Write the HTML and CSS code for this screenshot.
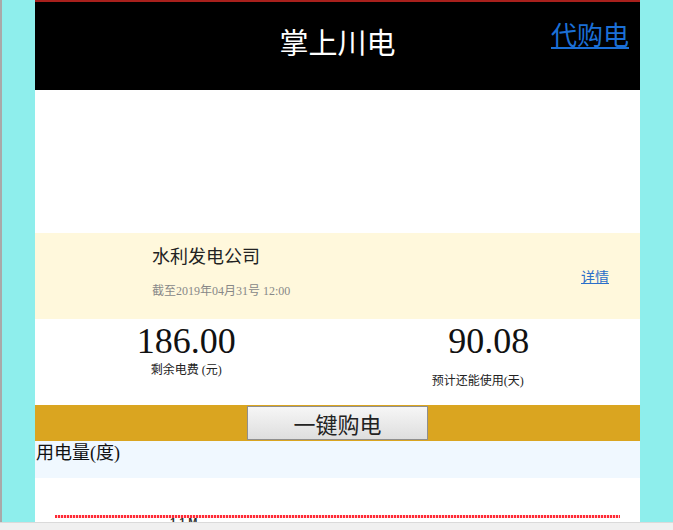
FILE: index.html
```html
<!DOCTYPE html>
<html lang="zh-CN">
<head>
  <meta charset="UTF-8">
  <meta name="viewport" content="width=device-width, initial-scale=1.0">
  <title>掌上川电</title>
  <link rel="stylesheet" href="styles.css">
</head>
<body>
  <div class="page">
    <header class="top-bar">
      <span></span>
      <h1 class="title">掌上川电</h1>
      <a href="#" class="agent-link">代购电</a>
    </header>

    <div class="banner"></div>

    <section class="account">
      <div class="account-info">
        <div class="company">水利发电公司</div>
        <div class="as-of">截至2019年04月31号 12:00</div>
      </div>
      <a href="#" class="detail-link">详情</a>
    </section>

    <section class="stats">
      <div class="stat">
        <div class="stat-value">186.00</div>
        <div class="stat-label">剩余电费&nbsp;(元)</div>
      </div>
      <div class="stat stat-days">
        <div class="stat-value">90.08</div>
        <div class="stat-label">预计还能使用(天)</div>
      </div>
    </section>

    <div class="buy-band">
      <button class="buy-btn" type="button">一键购电</button>
    </div>

    <div class="usage-title">用电量(度)</div>

    <div class="chart">
      <div class="chart-line"></div>
      <div class="chart-axis">1&nbsp;1&nbsp;M</div>
    </div>
  </div>
  <div class="scroll-strip"></div>
</body>
</html>
```

FILE: styles.css
```css
html, body {
  margin: 0;
  padding: 0;
  height: 100%;
  overflow: hidden;
}
html {
  border-left: 2px solid #a9a9a9;
}
body {
  background: #8eeeec;
  font-family: 'Liberation Serif', 'Noto Sans CJK SC', serif;
  color: #111;
}
.page {
  width: 605px;
  margin-left: 33px;
  background: #fff;
  border-top: 2px solid #a8201c;
}

/* --- header --- */
.top-bar {
  display: grid;
  grid-template-columns: 1fr auto 1fr;
  align-items: start;
  height: 88px;
  background: #000;
}
.title {
  margin: 0;
  padding-top: 24px;
  font-size: 29px;
  font-weight: normal;
  color: #fff;
  line-height: 36px;
}
.agent-link {
  justify-self: end;
  margin-right: 11px;
  margin-top: 18px;
  font-size: 26px;
  line-height: 34px;
  color: #1b6fd6;
}

.banner {
  height: 143px;
  background: #fff;
}

/* --- account --- */
.account {
  display: flex;
  align-items: center;
  height: 86px;
  background: #fff8dc;
  padding: 0 31px 0 117px;
}
.account-info {
  flex: 1;
  display: flex;
  flex-direction: column;
}
.company {
  font-size: 18px;
  line-height: 24px;
  color: #222;
  margin-top: -8px;
}
.as-of {
  margin-top: 12px;
  font-size: 12px;
  color: #888;
}
.detail-link {
  font-size: 14px;
  color: #2a6fc9;
}

/* --- stats --- */
.stats {
  display: grid;
  grid-template-columns: 1fr 1fr;
  height: 86px;
}
.stat {
  text-align: center;
}
.stat-value {
  font-size: 36px;
  line-height: 42px;
  margin-top: 1px;
}
.stat-label {
  font-size: 12px;
  line-height: 16px;
  color: #222;
}
.stat-days .stat-label {
  margin-top: 11px;
  padding-right: 22px;
}

/* --- buy band --- */
.buy-band {
  display: flex;
  justify-content: center;
  align-items: center;
  height: 36px;
  background: #daa520;
}
.buy-btn {
  width: 181px;
  height: 34px;
  border: 1px solid #8f8f8f;
  background: linear-gradient(#f6f6f6, #dedede);
  font-family: 'Noto Sans CJK SC', sans-serif;
  font-size: 22px;
  color: #222;
  padding: 0;
  line-height: 30px;
}

.usage-title {
  height: 37px;
  background: #f0f8ff;
  font-size: 18px;
  line-height: 24px;
  padding-left: 1px;
}

/* --- chart --- */
.chart {
  position: relative;
  height: 80px;
  padding: 37px 20px 0 20px;
}
.chart-line {
  height: 3px;
  background: repeating-linear-gradient(90deg, #ff2b36 0 2px, #ffd0d4 2px 3px);
}
.chart-axis {
  position: absolute;
  left: 135px;
  top: 38px;
  font-family: 'Liberation Sans', sans-serif;
  font-size: 11px;
  font-weight: bold;
  color: #333;
}

.scroll-strip {
  position: fixed;
  left: 0;
  right: 0;
  bottom: 0;
  height: 7px;
  background: #f0f0f0;
  border-top: 1px solid #dadada;
}
```
